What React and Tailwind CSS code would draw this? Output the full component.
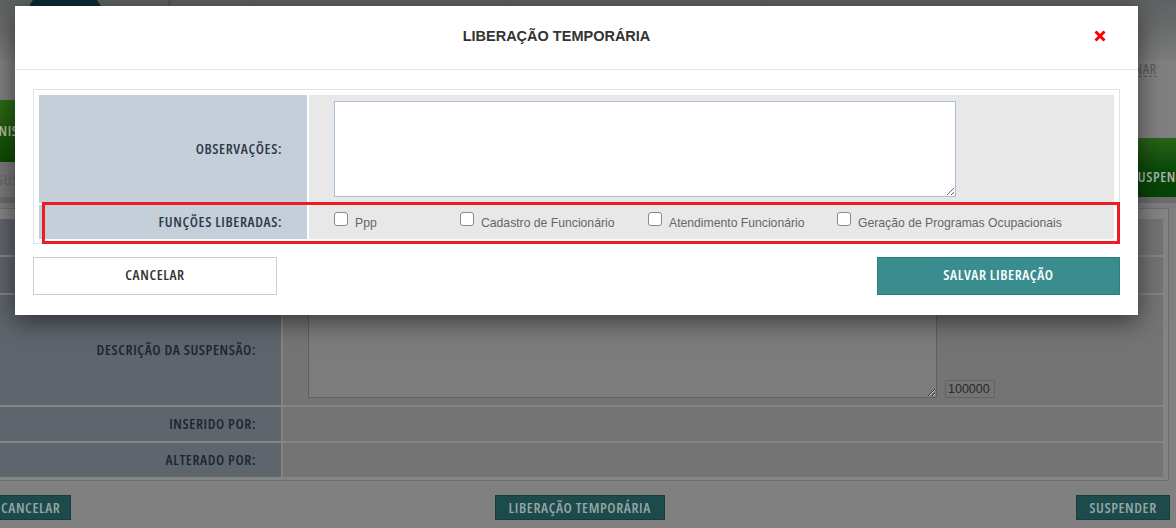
import React from "react";

const NARROW = "font-['Open_Sans','Liberation_Sans',sans-serif] [font-stretch:75%] text-[14.5px] tracking-[0.6px]";

const funcoes = [
  { label: "Ppp", w: "w-[126px]" },
  { label: "Cadastro de Funcionário", w: "w-[188px]" },
  { label: "Atendimento Funcionário", w: "w-[189px]" },
  { label: "Geração de Programas Ocupacionais", w: "" },
];

const CloseIcon = () => (
  <svg width="12" height="12" viewBox="0 0 12 12">
    <path d="M1.5 1.5 L10.5 10.5 M10.5 1.5 L1.5 10.5" stroke="#ff0000" strokeWidth="3" />
  </svg>
);

// page behind the modal (already dimmed by the overlay colours)
const BackgroundPage = () => (
  <div className="flex flex-col">
    <div className="flex h-[60px] bg-gradient-to-b from-[#5e6262] via-[#6c6d6d] to-[#7c7c7c]">
      <div className="ml-[25px] -mt-[16px] h-[80px] w-[80px] shrink-0 rounded-full bg-[#0e2a33]" />
      <div className="ml-[63px] w-[3px] bg-[#555858]" />
    </div>
    <div className="flex h-[40px] justify-end pr-[19px] pt-[1px]">
      <span className={`${NARROW} h-[16px] border-b border-dashed border-[#5a5a5a] leading-[15px] text-[#5a5a5a]`}>
        SELECIONAR
      </span>
    </div>
    <div className="flex h-[97px] justify-between">
      <div className="flex flex-col">
        <div className="flex h-[62px] w-[220px] items-center bg-gradient-to-b from-[#2e6c15] to-[#0e4805]">
          <span className={`${NARROW} -ml-[33px] font-semibold text-[#b0bfa8]`}>ADMINISTRAÇÃO</span>
        </div>
        <div className="flex h-[35px] w-[220px] items-center bg-[#7a7a7a]">
          <span className={`${NARROW} -ml-[3px] font-semibold text-[#686868]`}>SUSPENSÃO</span>
        </div>
      </div>
      <div className="-mr-[60px] mt-[38px] flex h-[59px] w-[120px] items-center bg-gradient-to-b from-[#2a6418] via-[#0b4b0b] to-[#064306] pl-[15px] pt-[19px]">
        <span className={`${NARROW} font-semibold text-[#a8b4a8]`}>SUSPENDER</span>
      </div>
    </div>
    <div className="h-[6px] bg-[#6c6c6c]" />
    <div className="h-[5px] bg-[#7d7d7d]" />
    <div className="-ml-[20px] flex w-[1189px] flex-col gap-[2px] border border-[#6e6e6e] bg-[#848484] px-[5px] pb-[3px] pt-[10px]">
      <div className="flex h-[36px] gap-[2px]">
        <div className="w-[295px] bg-[#5f656c]" />
        <div className="flex-1 bg-[#747474]" />
      </div>
      <div className="flex h-[36px] gap-[2px]">
        <div className="w-[295px] bg-[#5f656c]" />
        <div className="flex-1 bg-[#747474]" />
      </div>
      <div className="flex h-[110px] gap-[2px]">
        <div className={`${NARROW} flex w-[295px] items-center justify-end bg-[#5f656c] pr-[25px] font-semibold text-[#1c2633]`}>
          DESCRIÇÃO DA SUSPENSÃO:
        </div>
        <div className="flex flex-1 items-end bg-[#747474] py-[7px] pl-[25px]">
          <textarea readOnly className="h-[97px] w-[629px] resize border border-[#56626c] bg-[#7c7c7c]" />
          <div className="ml-[8px] flex h-[18px] w-[50px] items-center border border-[#5a6670] pl-[2px] text-[12.5px] text-[#2a2a2a]">
            100000
          </div>
        </div>
      </div>
      <div className="flex h-[34px] gap-[2px]">
        <div className={`${NARROW} flex w-[295px] items-center justify-end bg-[#5f656c] pr-[25px] font-semibold text-[#1c2633]`}>
          INSERIDO POR:
        </div>
        <div className="flex-1 bg-[#747474]" />
      </div>
      <div className="flex h-[34px] gap-[2px]">
        <div className={`${NARROW} flex w-[295px] items-center justify-end bg-[#5f656c] pr-[25px] font-semibold text-[#1c2633]`}>
          ALTERADO POR:
        </div>
        <div className="flex-1 bg-[#747474]" />
      </div>
    </div>
    <div className={`${NARROW} mt-[14px] flex justify-between whitespace-nowrap font-semibold text-[#95a5a5]`}>
      <button className="-ml-[13px] h-[25px] border border-[#173e3f] bg-[#1d4b4c] pl-[13px] pr-[10px]">CANCELAR</button>
      <button className="ml-[12px] h-[25px] w-[170px] border border-[#173e3f] bg-[#1d4b4c]">LIBERAÇÃO TEMPORÁRIA</button>
      <button className="mr-[6px] h-[25px] w-[94px] border border-[#173e3f] bg-[#1d4b4c]">SUSPENDER</button>
    </div>
  </div>
);

const App = () => {
  return (
    <div className="relative h-[528px] w-[1176px] overflow-hidden bg-[#808080] font-['Liberation_Sans',Arial,sans-serif]">
      <BackgroundPage />

      <div className="absolute left-[15px] top-[6px] w-[1123px] bg-white shadow-[0_6px_24px_rgba(0,0,0,0.55)]">
        <div className="flex h-[64px] items-center border-b border-[#e5e5e5] px-[18px]">
          <h2 className="-mt-[2px] flex-1 text-center text-[14.5px] font-bold text-[#333]">LIBERAÇÃO TEMPORÁRIA</h2>
          <button className="-mt-[4px] flex w-10 justify-center">
            <CloseIcon />
          </button>
        </div>

        <div className="px-[18px] pb-[20px] pt-[19px]">
          <div className="flex flex-col gap-[2px] border border-[#dde3ea] bg-white p-[5px] pb-[4px]">
            <div className="flex h-[108px] gap-[2px]">
              <div className={`${NARROW} flex w-[268px] items-center justify-end bg-[#c5cfd9] pr-[25px] font-semibold text-[#2d3b4a]`}>
                OBSERVAÇÕES:
              </div>
              <div className="flex-1 bg-[#e8e8e8] py-[6px] pl-[25px]">
                <textarea className="h-[96px] w-[622px] resize border border-[#a9bfd6] bg-white" />
              </div>
            </div>

            <div className="relative flex h-[34px] gap-[2px]">
              <div className={`${NARROW} flex w-[268px] items-center justify-end bg-[#c5cfd9] pr-[25px] font-semibold text-[#2d3b4a]`}>
                FUNÇÕES LIBERADAS:
              </div>
              <div className="flex flex-1 items-center bg-[#e8e8e8] pl-[25px]">
                {funcoes.map((f) => (
                  <label key={f.label} className={`flex items-start gap-[7px] ${f.w}`}>
                    <input
                      type="checkbox"
                      className="-mt-[1px] h-[14px] w-[14px] shrink-0 appearance-none rounded-[3px] border border-[#8a8a8a] bg-white"
                    />
                    <span className="mt-[2px] text-[12.2px] leading-[16px] text-[#666]">{f.label}</span>
                  </label>
                ))}
              </div>
              <div className="pointer-events-none absolute -bottom-[5px] -right-[6px] -top-[3px] left-[3px] border-[3px] border-[#ed1c24]" />
            </div>
          </div>

          <div className={`${NARROW} mt-[13px] flex justify-between font-semibold`}>
            <button className="h-[38px] w-[244px] border border-[#cccccc] bg-white pb-[2px] text-[#333]">CANCELAR</button>
            <button className="h-[38px] w-[243px] border border-[#2f7f80] bg-[#3a8d8e] pb-[2px] text-white">SALVAR LIBERAÇÃO</button>
          </div>
        </div>
      </div>
    </div>
  );
};

export default App;
